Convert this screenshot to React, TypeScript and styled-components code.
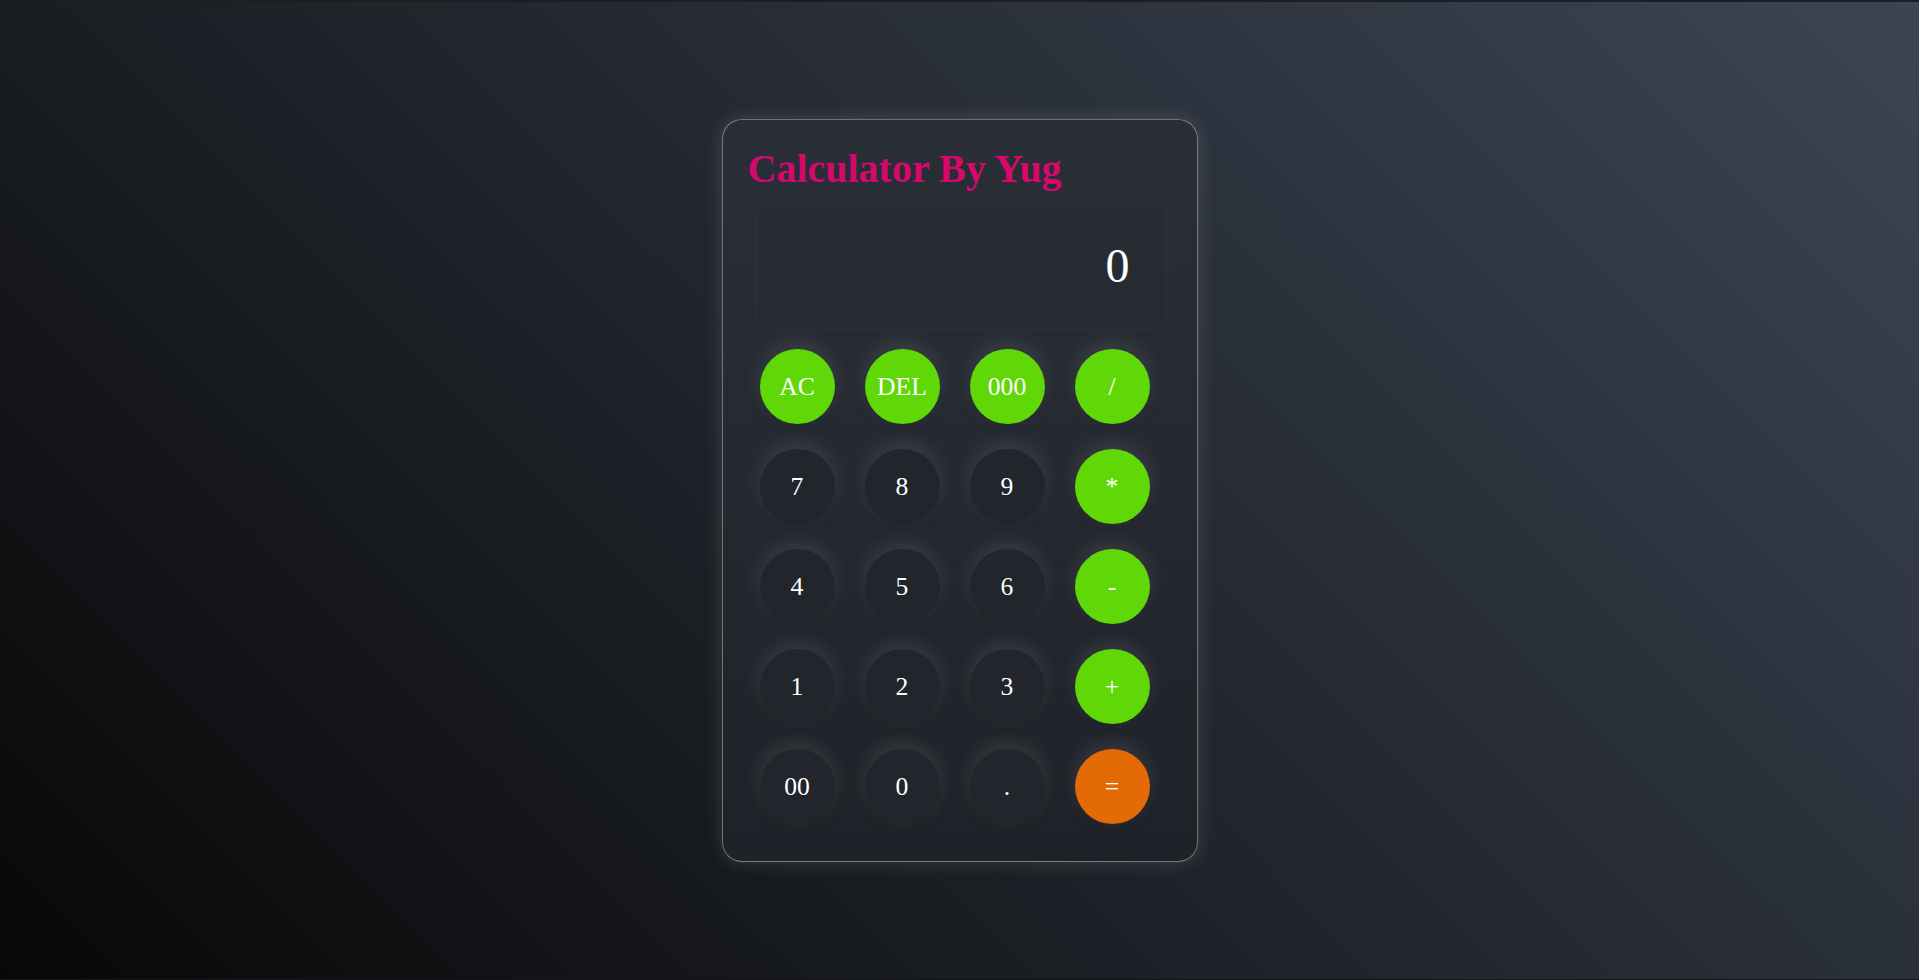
import React from "react";
import styled, { createGlobalStyle } from "styled-components";

const Global = createGlobalStyle`
  html, body { margin: 0; padding: 0; }
  body { font-family: "Liberation Serif", "Times New Roman", serif; }
  * { box-sizing: border-box; }
`;

const Page = styled.div`
  height: 100vh;
  display: flex;
  align-items: center;
  justify-content: center;
  background: linear-gradient(45deg, #080808 0%, #3c4554 100%);
  border-top: 2px solid #1d1e22;
  border-bottom: 1px solid #141518;
`;

const Card = styled.div`
  width: 476px;
  padding: 27px 0 37px 0;
  border: 1px solid rgba(255, 255, 255, 0.36);
  border-radius: 20px;
  background: linear-gradient(to bottom, #2a2f37, #1f2228);
  box-shadow: 0 0 18px rgba(255, 255, 255, 0.14);
  display: flex;
  flex-direction: column;
`;

const Title = styled.h1`
  margin: 0 0 15px 25px;
  font-family: "Liberation Serif", "Times New Roman", serif;
  font-size: 40px;
  line-height: 44px;
  font-weight: bold;
  color: #d6086c;
`;

const Display = styled.div`
  margin: 0 32px 21px 35px;
  height: 122px;
  display: flex;
  align-items: center;
  justify-content: flex-end;
  padding: 0 35px 4px 0;
  font-family: "Liberation Serif", "Times New Roman", serif;
  font-size: 48px;
  color: #ffffff;
  background: rgba(0, 0, 0, 0.015);
  box-shadow: 0 0 10px rgba(255, 255, 255, 0.035);
  border-radius: 6px;
`;

const Keypad = styled.div`
  margin-left: 37px;
  display: grid;
  grid-template-columns: repeat(4, 75px);
  grid-auto-rows: 75px;
  column-gap: 30px;
  row-gap: 25px;
`;

type Kind = "num" | "op" | "eq";

const Key = styled.button<{ $kind: Kind }>`
  width: 75px;
  height: 75px;
  border: none;
  border-radius: 50%;
  padding: 0;
  display: flex;
  align-items: center;
  justify-content: center;
  font-family: "Liberation Serif", "Times New Roman", serif;
  font-size: 25.6px;
  color: #ffffff;
  cursor: pointer;
  background: ${(p) =>
    p.$kind === "op" ? "#60d808" : p.$kind === "eq" ? "#e36a05" : "#22252b"};
  box-shadow: 0 -6px 20px rgba(255, 255, 255, 0.11), 0 6px 12px rgba(0, 0, 0, 0.08);
`;

const keys: { label: string; kind: Kind }[] = [
  { label: "AC", kind: "op" },
  { label: "DEL", kind: "op" },
  { label: "000", kind: "op" },
  { label: "/", kind: "op" },
  { label: "7", kind: "num" },
  { label: "8", kind: "num" },
  { label: "9", kind: "num" },
  { label: "*", kind: "op" },
  { label: "4", kind: "num" },
  { label: "5", kind: "num" },
  { label: "6", kind: "num" },
  { label: "-", kind: "op" },
  { label: "1", kind: "num" },
  { label: "2", kind: "num" },
  { label: "3", kind: "num" },
  { label: "+", kind: "op" },
  { label: "00", kind: "num" },
  { label: "0", kind: "num" },
  { label: ".", kind: "num" },
  { label: "=", kind: "eq" },
];

export default function App() {
  return (
    <>
      <Global />
      <Page>
        <Card>
          <Title>Calculator By Yug</Title>
          <Display>0</Display>
          <Keypad>
            {keys.map((k) => (
              <Key key={k.label} $kind={k.kind}>
                {k.label}
              </Key>
            ))}
          </Keypad>
        </Card>
      </Page>
    </>
  );
}
